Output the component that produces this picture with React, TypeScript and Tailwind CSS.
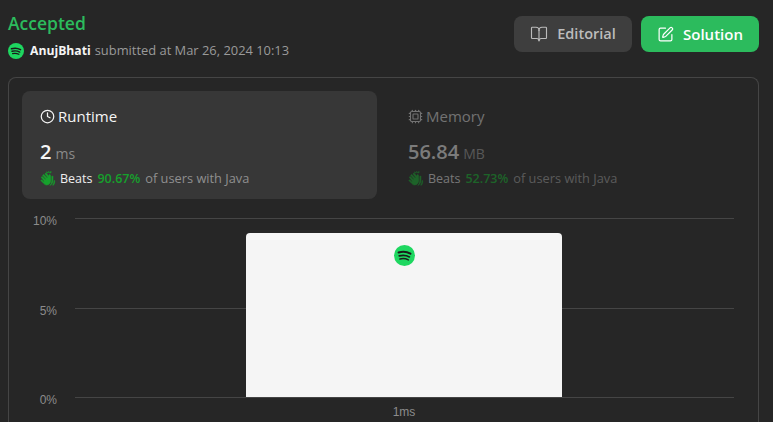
import { BookOpen, Clock, Cpu, SquarePen } from 'lucide-react'

const uiFont = 'font-["Open_Sans","Noto_Sans",sans-serif]'

function SpotifyIcon({ className }: { className: string }) {
  return (
    <svg viewBox="0 0 24 24" className={className}>
      <circle cx="12" cy="12" r="12" fill="#1ed760" />
      <path d="M5.2 8.6c4.4-1.3 9.6-1 13.6 1.3" fill="none" stroke="#1a1a1a" strokeWidth="2.3" strokeLinecap="round" />
      <path d="M6 12.4c3.8-1 8.2-.7 11.6 1.2" fill="none" stroke="#1a1a1a" strokeWidth="2" strokeLinecap="round" />
      <path d="M6.8 16c3.2-.8 6.6-.5 9.6 1" fill="none" stroke="#1a1a1a" strokeWidth="1.7" strokeLinecap="round" />
    </svg>
  )
}

function ClapIcon({ className }: { className: string }) {
  return (
    <svg viewBox="0 0 16 16" className={className} fill="currentColor" stroke="currentColor" strokeWidth="0.5">
      <path d="M1.2 6.2 2.3 5.4l3 3.1.6-.5-3.3-3.7 1.2-.9 3.3 3.6.6-.5L4.9 2.8 6 2l2.9 3.3.1-1.2c.1-.7 1.3-.8 1.5.1l.3 4.7c.1 2.9-1.6 4.9-4 5.1-1.3.1-2.2-.5-3-1.4L.8 9.6l.9-.9 2 2 .5-.5-3-4z" />
      <path d="M11.8 5.2c.6-.5 1.3-.2 1.2.6l-.1 3.6c0 2.4-1.2 4.2-3.1 5.1 1.3-1.3 2-2.9 2-5z" />
      <path d="M14.6 9.5c.4 1.9-.2 3.8-1.5 5l-.5-.4c1-1.2 1.5-2.7 1.3-4.4zM8.4.6l.6-.2.5 1.5-.6.2zM10.6.5l.6.1-.3 1.5-.6-.1zM6.4 1l.5-.3.8 1.2-.5.3z" />
    </svg>
  )
}

interface StatProps {
  icon: React.ReactNode
  title: string
  value: string
  unit: string
  beats: string
  active?: boolean
}

function Stat({ icon, title, value, unit, beats, active }: StatProps) {
  return (
    <div className={`h-[108px] rounded-lg pl-[18px] pt-[14px] ${active ? 'bg-[#373737]' : 'opacity-50'}`}>
      <div className={`flex h-[22px] items-center gap-[3px] text-[15px] ${active ? 'text-[#f5f5f5]' : 'text-[#bdbdbd]'}`}>
        {icon}
        <span>{title}</span>
      </div>
      <div className="mt-[11px] flex h-[28px] items-center gap-[4px]">
        <span className={`text-[20px] font-semibold ${active ? 'text-[#f5f5f5]' : 'text-[#d0d0d0]'}`}>{value}</span>
        <span className="mt-[2px] text-[14px] text-[#8a8a8a]">{unit}</span>
      </div>
      <div className="mt-[4px] flex h-[18px] items-center text-[12.5px]">
        <ClapIcon className="mr-[4px] h-[16px] w-[16px] text-[#16a02c]" />
        <span className={active ? 'text-[#eeeeee]' : 'text-[#c8c8c8]'}>Beats</span>
        <span className="ml-[5px] font-semibold text-[#16a02c]">{beats}</span>
        <span className="ml-[5px] text-[12.8px] text-[#8f8f8f]">of users with Java</span>
      </div>
    </div>
  )
}

function GridRow({ label, className }: { label: string; className?: string }) {
  return (
    <div className={`flex h-px items-center ${className ?? ''}`}>
      <span className='mt-[4px] w-[49px] shrink-0 text-right font-["Liberation_Sans",sans-serif] text-[12px] text-[#8c8c8c]'>{label}</span>
      <div className="ml-[18px] h-px flex-1 bg-[#454545]" />
    </div>
  )
}

export default function App() {
  return (
    <div className={`h-[422px] w-[773px] overflow-hidden bg-[#262626] pl-[8px] pr-[14px] pt-[14px] ${uiFont}`}>
      {/* Header */}
      <div className="flex h-[63px] items-start justify-between">
        <div>
          <div className="h-[20px] text-[17.5px] font-semibold leading-[18px] text-[#2cbb5d]">Accepted</div>
          <div className="mt-[8px] flex h-[18px] items-center text-[12.9px]">
            <SpotifyIcon className="h-[16px] w-[16px]" />
            <span className="ml-[6px] text-[12.2px] font-bold text-[#f5f5f5]">AnujBhati</span>
            <span className="ml-[4px] text-[#9a9a9a]">submitted at Mar 26, 2024 10:13</span>
          </div>
        </div>
        <div className="flex gap-[9px] pt-[2px]">
          <button className="flex h-[36px] w-[118px] items-center justify-center gap-[9px] rounded-lg bg-[#3e3e3e] text-[14.5px] font-semibold text-[#bcbcbc]">
            <BookOpen className="h-[18px] w-[18px]" strokeWidth={1.5} />
            Editorial
          </button>
          <button className="flex h-[36px] w-[118px] items-center justify-center gap-[9px] rounded-lg bg-[#2cbb5d] text-[15px] font-semibold text-white">
            <SquarePen className="h-[17px] w-[17px]" strokeWidth={1.7} />
            Solution
          </button>
        </div>
      </div>

      {/* Result card */}
      <div className="h-[400px] rounded-t-lg border border-b-0 border-[#454545] px-[13px] pt-[13px]">
        <div className="grid grid-cols-2 gap-[13px]">
          <Stat
            active
            icon={<Clock className="h-[15px] w-[15px]" strokeWidth={2} />}
            title="Runtime"
            value="2"
            unit="ms"
            beats="90.67%"
          />
          <Stat
            icon={<Cpu className="h-[15px] w-[15px]" strokeWidth={1.8} />}
            title="Memory"
            value="56.84"
            unit="MB"
            beats="52.73%"
          />
        </div>

        {/* Chart */}
        <div className="relative ml-[-22px] mr-[11px] mt-[19px] h-[180px]">
          <div className="flex h-full flex-col pl-[8px]">
            <GridRow label="10%" />
            <GridRow label="5%" className="mt-[89px]" />
            <GridRow label="0%" className="mt-[88px]" />
          </div>
          <div className="absolute bottom-[1px] left-[246px] flex h-[164px] w-[316px] justify-center rounded-t bg-[#f5f5f5] pt-[12px]">
            <SpotifyIcon className="h-[21px] w-[21px]" />
          </div>
          <div className='absolute left-[246px] top-[185px] w-[316px] text-center font-["Liberation_Sans",sans-serif] text-[12px] text-[#8c8c8c]'>
            1ms
          </div>
        </div>
      </div>
    </div>
  )
}
